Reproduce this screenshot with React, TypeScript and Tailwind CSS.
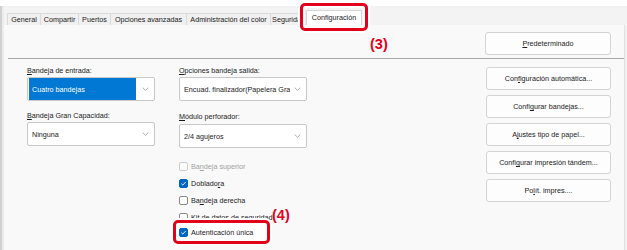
import React from 'react'

/*
  Printer properties dialog — "Configuración" tab with two red callouts (3) and (4).
*/

const Chevron = () => (
  <svg width="7" height="4" viewBox="0 0 7 4" className="shrink-0">
    <path d="M0.7 0.6 L3.5 3.3 L6.3 0.6" fill="none" stroke="#8c8c8c" strokeWidth="0.7" />
  </svg>
)

function Select({ value, active }: { value: string; active?: boolean }) {
  return (
    <div className="flex h-[24px] w-[128px] items-center rounded-[2px] border border-[#c8c8c8] bg-white pr-[5px]">
      {active ? (
        <div className="ml-[1px] mr-[6px] flex h-[22px] w-[113px] items-center bg-[#0078d4] pl-[3px] text-white">
          <span className="overflow-hidden whitespace-nowrap">{value}</span>
        </div>
      ) : (
        <div className="flex min-w-0 flex-1 items-center pl-[4px] pr-[4px]">
          <span className="overflow-hidden whitespace-nowrap">{value}</span>
        </div>
      )}
      <Chevron />
    </div>
  )
}

function Label({ pre, key_, post }: { pre?: string; key_: string; post: string }) {
  return (
    <div className="h-[9px] leading-[9px] whitespace-nowrap">
      {pre}
      <u className="underline-offset-[1px]">{key_}</u>
      {post}
    </div>
  )
}

function Check({
  checked,
  disabled,
  children,
}: {
  checked?: boolean
  disabled?: boolean
  children: React.ReactNode
}) {
  const box = checked
    ? 'bg-[#0067c0] border-[#0067c0]'
    : disabled
      ? 'bg-[#fbfbfb] border-[#cdcdcd]'
      : 'bg-white border-[#8a8a8a]'
  return (
    <div className={`flex items-center gap-[3px] whitespace-nowrap ${disabled ? 'text-[#a2a2a2]' : ''}`}>
      <span className={`flex h-[9px] w-[9px] shrink-0 items-center justify-center rounded-[2px] border ${box}`}>
        {checked ? (
          <svg width="7" height="7" viewBox="0 0 7 7">
            <path d="M1.3 3.7 L2.8 5.1 L5.8 1.9" fill="none" stroke="white" strokeWidth="0.9" />
          </svg>
        ) : null}
      </span>
      <span className="leading-[9px]">{children}</span>
    </div>
  )
}

function Btn({ children, w = 'w-[125px]' }: { children: React.ReactNode; w?: string }) {
  return (
    <div
      className={`flex h-[23px] ${w} items-center justify-center rounded-[3px] border border-[#d3d3d3] bg-[#fdfdfd] whitespace-nowrap`}
    >
      {children}
    </div>
  )
}

const tabs = [
  { label: 'General', w: 'w-[33px]' },
  { label: 'Compartir', w: 'w-[38px]' },
  { label: 'Puertos', w: 'w-[32px]' },
  { label: 'Opciones avanzadas', w: 'w-[76px]' },
  { label: 'Administración del color', w: 'w-[84px]' },
  { label: 'Seguridad', w: 'w-[36px]' },
]

export default function App() {
  return (
    <div className="relative h-[250px] w-[627px] overflow-hidden bg-white font-['Liberation_Sans',Arial,sans-serif] text-[7.2px] leading-[9px] text-[#1b1b1b]">
      <div className="h-[6px] bg-white" />
      <div className="flex h-[244px]">
        <div className="w-[2px] bg-[#d0d0d0]" />
        <div className="w-[2px] bg-[#ececec]" />
        <div className="flex flex-1 flex-col bg-[#f3f3f3]">
          {/* tab strip */}
          <div className="flex h-[19px] items-end pl-[3px]">
            {tabs.map((t) => (
              <div
                key={t.label}
                className={`flex h-[12px] ${t.w} items-center justify-center overflow-hidden border border-b-0 border-r-0 border-[#dadada] bg-[#f0f0f0] whitespace-nowrap`}
              >
                {t.label}
              </div>
            ))}
            <div className="-mb-px flex h-[16px] w-[56px] items-center justify-center border border-b-0 border-[#d6d6d6] bg-white pb-[2px]">
              Configuración
            </div>
          </div>

          {/* panel */}
          <div className="flex flex-1">
            <div className="flex w-[620px] flex-col bg-[#f9f9f9]">
              <div className="flex h-[33px] justify-end pr-[13px] pt-[7px]">
                <Btn w="w-[126px]">
                  <span>
                    <u>P</u>redeterminado
                  </span>
                </Btn>
              </div>
              <div className="ml-[4px] mr-[-3px] h-px bg-[#a8a8a8]" />

              <div className="flex pl-[23px] pr-[13px]">
                {/* column A */}
                <div className="flex w-[128px] flex-col pt-[7px]">
                  <Label key_="B" post="andeja de entrada:" />
                  <div className="mt-[2px]">
                    <Select value="Cuatro bandejas" active />
                  </div>
                  <div className="mt-[10px]">
                    <Label key_="B" post="andeja Gran Capacidad:" />
                  </div>
                  <div className="mt-[2px]">
                    <Select value="Ninguna" />
                  </div>
                </div>

                {/* column B */}
                <div className="ml-[24px] flex w-[128px] flex-col pt-[7px]">
                  <Label key_="O" post="pciones bandeja salida:" />
                  <div className="mt-[2px]">
                    <Select value="Encuad. finalizador(Papelera Grande)" />
                  </div>
                  <div className="mt-[11px]">
                    <Label key_="M" post="ódulo perforador:" />
                  </div>
                  <div className="mt-[3px]">
                    <Select value="2/4 agujeros" />
                  </div>

                  <div className="mt-[10px] flex flex-col">
                    <div className="flex h-[17px] items-center">
                      <Check disabled>
                        Ba<u>n</u>deja superior
                      </Check>
                    </div>
                    <div className="flex h-[17px] items-center">
                      <Check checked>
                        Doblado<u>r</u>a
                      </Check>
                    </div>
                    <div className="flex h-[17px] items-center">
                      <Check>
                        Ba<u>n</u>deja derecha
                      </Check>
                    </div>
                    <div className="flex h-[17px] items-center">
                      <Check>Kit de datos de seguridad</Check>
                    </div>
                    <div className="relative -ml-[6px] -mt-[6px] flex h-[24px] w-[97px] items-center rounded-[5px] border-[3px] border-[#e3001b] bg-white pl-[3px] shadow-[0_0_0_2px_white]">
                      <Check checked>Autenticación única</Check>
                      <span className="absolute left-[96px] top-[-15px] text-[14.5px] font-bold leading-[15px] text-[#e3001b]">
                        (4)
                      </span>
                    </div>
                  </div>
                </div>

                {/* right buttons */}
                <div className="ml-auto flex flex-col gap-[5px] pt-[8px]">
                  <Btn>
                    <span>
                      Con<u>f</u>iguración automática...
                    </span>
                  </Btn>
                  <Btn>
                    <span>
                      Confi<u>g</u>urar bandejas...
                    </span>
                  </Btn>
                  <Btn>
                    <span>
                      A<u>j</u>ustes tipo de papel...
                    </span>
                  </Btn>
                  <Btn>
                    <span>
                      Confi<u>g</u>urar impresión tándem...
                    </span>
                  </Btn>
                  <Btn>
                    <span>
                      Po<u>l</u>ít. impres....
                    </span>
                  </Btn>
                </div>
              </div>
            </div>
            <div className="flex-1 border-l border-[#e2e2e2] bg-[#f0f0f0]" />
          </div>
        </div>
      </div>

      {/* callout (3) around the selected tab */}
      <div className="pointer-events-none absolute left-[300px] top-[3px] h-[28px] w-[68px] rounded-[5px] border-[3px] border-[#e3001b] shadow-[0_0_0_2px_white,inset_0_0_0_2px_white]" />
      <span className="absolute left-[370px] top-[37px] text-[14.5px] font-bold leading-[15px] text-[#e3001b]">(3)</span>
    </div>
  )
}
